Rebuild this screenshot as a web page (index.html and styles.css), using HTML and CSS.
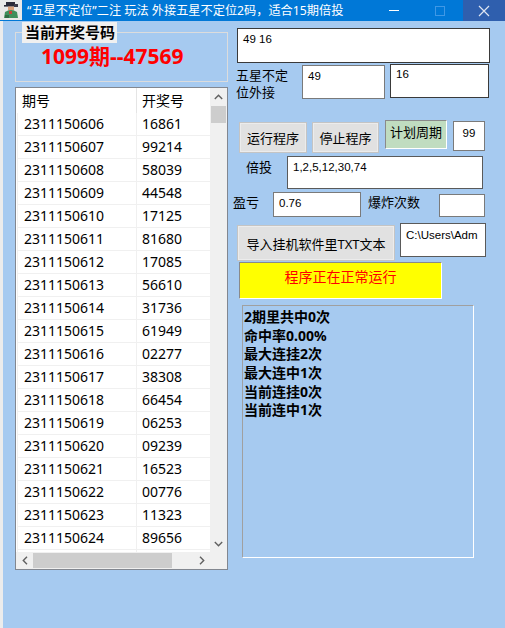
FILE: index.html
```html
<!DOCTYPE html>
<html lang="zh-CN">
<head>
<meta charset="utf-8">
<title>五星不定位</title>
<link rel="stylesheet" href="styles.css">
</head>
<body>
<div class="window">
  <div class="titlebar">
    <div class="app-icon">
      <svg width="18" height="18" viewBox="0 0 18 18">
        <rect x="4" y="1" width="9" height="3" fill="#2b2b3a"/>
        <rect x="2" y="4" width="13" height="1.6" fill="#2b2b3a"/>
        <rect x="6" y="5.6" width="6" height="4" fill="#d9a07a"/>
        <rect x="12" y="3" width="4" height="3" fill="#3a3a4a"/>
        <path d="M3 11 Q9 7 15 11 L16 17 L2 17 Z" fill="#3f8f5c"/>
        <rect x="7" y="10" width="3" height="3" fill="#c8423a"/>
        <rect x="3" y="14" width="4" height="3" fill="#2f6d45"/>
      </svg>
    </div>
    <div class="title">“五星不定位”二注 玩法 外接五星不定位2码，适合15期倍投</div>
    <div class="ctl ctl-min"><span class="min-line"></span></div>
    <div class="ctl ctl-max"><span class="max-box"></span></div>
    <div class="ctl ctl-close">
      <svg width="12" height="12" viewBox="0 0 12 12"><path d="M1 1 L11 11 M11 1 L1 11" stroke="#dfe5f1" stroke-width="1.2"/></svg>
    </div>
  </div>
  <div class="client">
    <div class="desk-strip"></div>
    <div class="left-col">
      <fieldset class="group">
        <legend class="group-title">当前开奖号码</legend>
        <div class="current">1099期--47569</div>
      </fieldset>
      <div class="list">
        <div class="list-body">
          <div class="list-head">
            <div class="c1">期号</div>
            <div class="c2">开奖号</div>
          </div>
          <div class="row"><div class="c1">2311150606</div><div class="c2">16861</div></div>
          <div class="row"><div class="c1">2311150607</div><div class="c2">99214</div></div>
          <div class="row"><div class="c1">2311150608</div><div class="c2">58039</div></div>
          <div class="row"><div class="c1">2311150609</div><div class="c2">44548</div></div>
          <div class="row"><div class="c1">2311150610</div><div class="c2">17125</div></div>
          <div class="row"><div class="c1">2311150611</div><div class="c2">81680</div></div>
          <div class="row"><div class="c1">2311150612</div><div class="c2">17085</div></div>
          <div class="row"><div class="c1">2311150613</div><div class="c2">56610</div></div>
          <div class="row"><div class="c1">2311150614</div><div class="c2">31736</div></div>
          <div class="row"><div class="c1">2311150615</div><div class="c2">61949</div></div>
          <div class="row"><div class="c1">2311150616</div><div class="c2">02277</div></div>
          <div class="row"><div class="c1">2311150617</div><div class="c2">38308</div></div>
          <div class="row"><div class="c1">2311150618</div><div class="c2">66454</div></div>
          <div class="row"><div class="c1">2311150619</div><div class="c2">06253</div></div>
          <div class="row"><div class="c1">2311150620</div><div class="c2">09239</div></div>
          <div class="row"><div class="c1">2311150621</div><div class="c2">16523</div></div>
          <div class="row"><div class="c1">2311150622</div><div class="c2">00776</div></div>
          <div class="row"><div class="c1">2311150623</div><div class="c2">11323</div></div>
          <div class="row"><div class="c1">2311150624</div><div class="c2">89656</div></div>
          <div class="row"><div class="c1"></div><div class="c2"></div></div>
        </div>
        <div class="vscroll">
          <div class="sb-btn"><svg width="9" height="6" viewBox="0 0 9 6"><path d="M0.8 5 L4.5 1.3 L8.2 5" fill="none" stroke="#606060" stroke-width="1.4"/></svg></div>
          <div class="vtrack"><div class="vthumb"></div></div>
          <div class="sb-btn"><svg width="9" height="6" viewBox="0 0 9 6"><path d="M0.8 1 L4.5 4.7 L8.2 1" fill="none" stroke="#606060" stroke-width="1.4"/></svg></div>
        </div>
        <div class="hscroll">
          <div class="sb-btn"><svg width="6" height="9" viewBox="0 0 6 9"><path d="M5 0.8 L1.3 4.5 L5 8.2" fill="none" stroke="#606060" stroke-width="1.4"/></svg></div>
          <div class="htrack"><div class="hthumb"></div></div>
          <div class="sb-btn"><svg width="6" height="9" viewBox="0 0 6 9"><path d="M1 0.8 L4.7 4.5 L1 8.2" fill="none" stroke="#606060" stroke-width="1.4"/></svg></div>
        </div>
        <div class="corner"></div>
      </div>
    </div>
    <div class="right-col">
      <div class="r r1">
        <div class="tb tb-dark tb-top">49 16</div>
      </div>
      <div class="r r2">
        <div class="lbl lbl-wrap"><div>五星不定</div><div>位外接</div></div>
        <div class="tb tb-49">49</div>
        <div class="tb tb-dark tb-16">16</div>
      </div>
      <div class="r r3">
        <div class="btn btn-run">运行程序</div>
        <div class="btn btn-stop">停止程序</div>
        <div class="sunken plan">计划周期</div>
        <div class="tb tb-99">99</div>
      </div>
      <div class="r r4">
        <div class="lbl lbl-bei">倍投</div>
        <div class="tb tb-mid tb-bei">1,2,5,12,30,74</div>
      </div>
      <div class="r r5">
        <div class="lbl lbl-yk">盈亏</div>
        <div class="tb tb-yk">0.76</div>
        <div class="lbl lbl-bz">爆炸次数</div>
        <div class="tb tb-bz"></div>
      </div>
      <div class="r r6">
        <div class="btn btn-import">导入挂机软件里TXT文本</div>
        <div class="tb tb-mid tb-path">C:\Users\Adm</div>
      </div>
      <div class="r r7">
        <div class="sunken status">程序正在正常运行</div>
      </div>
      <div class="r r8">
        <div class="stats">
          <div>2期里共中0次</div>
          <div>命中率0.00%</div>
          <div>最大连挂2次</div>
          <div>最大连中1次</div>
          <div>当前连挂0次</div>
          <div>当前连中1次</div>
        </div>
      </div>
    </div>
  </div>
</div>
</body>
</html>
```

FILE: styles.css
```css
* { box-sizing: border-box; }
html, body { margin: 0; padding: 0; }
body {
  width: 505px;
  height: 628px;
  overflow: hidden;
  background: #a6caf0;
  font-family: "Noto Sans", "Noto Sans CJK SC", sans-serif;
  color: #000;
}
.window {
  width: 505px;
  height: 628px;
  display: flex;
  flex-direction: column;
}

/* title bar */
.titlebar {
  height: 21px;
  flex: none;
  display: flex;
  align-items: stretch;
  background: #0078d7;
  color: #fff;
  font-size: 12.2px;
}
.app-icon {
  width: 22px;
  height: 20px;
  background: #e9e9e9;
  display: flex;
  align-items: center;
  justify-content: center;
}
.title {
  flex: 1;
  margin-left: 5px;
  line-height: 21px;
  white-space: nowrap;
  overflow: hidden;
}
.ctl {
  width: 46px;
  display: flex;
  align-items: center;
  justify-content: center;
}
.ctl-close { width: 42px; background: #2f5fae; }
.min-line { width: 10px; height: 1px; background: #fff; }
.max-box { width: 10px; height: 10px; border: 1px solid #3f98e6; }

/* client */
.client {
  flex: 1;
  display: flex;
  background: #a6caf0;
}
.desk-strip {
  width: 3px;
  background: #ececec;
}
.left-col {
  width: 213px;
  margin-left: 12px;
  display: flex;
  flex-direction: column;
}

/* group box */
.group {
  margin: 1px 0 0;
  padding: 0 0 14px 6px;
  border: 1px solid #dcdcdc;
  min-width: 0;
}
.group-title {
  width: 95px;
  height: 21px;
  padding: 0 0 0 3px;
  background: #f0f0f0;
  font-size: 15px;
  font-weight: bold;
  line-height: 21px;
  white-space: nowrap;
}
.current {
  margin-left: 19px;
  font-size: 21px;
  font-weight: bold;
  line-height: 24px;
  color: #ff0000;
  white-space: nowrap;
  padding-top: 1px;
  height: 24px;
}

/* list view */
.list {
  margin-top: 5px;
  height: 483px;
  border: 1px solid #828790;
  background: #fff;
  display: grid;
  grid-template-columns: 1fr 17px;
  grid-template-rows: 1fr 17px;
}
.list-body {
  overflow: hidden;
  font-size: 14px;
}
.list-head, .row {
  display: flex;
}
.list-head {
  height: 25px;
  line-height: 25px;
}
.list-head .c1 { border-right: 1px solid #e5e5e5; }
.row {
  height: 23px;
  line-height: 22px;
  border-bottom: 1px solid #f0f0f0;
  margin-left: 1px;
}
.c1 {
  width: 121px;
  padding-left: 6px;
  white-space: nowrap;
}
.row .c1 { width: 120px; border-right: 1px solid #f0f0f0; border-left: 1px solid #f0f0f0; }
.c2 {
  flex: 1;
  padding-left: 5px;
  white-space: nowrap;
}
.vscroll {
  background: #f0f0f0;
  display: flex;
  flex-direction: column;
}
.sb-btn {
  width: 17px;
  height: 17px;
  flex: none;
  display: flex;
  align-items: center;
  justify-content: center;
}
.vtrack { flex: 1; padding: 1px 1px 0 1px; }
.vthumb { height: 17px; background: #cdcdcd; }
.hscroll {
  background: #f0f0f0;
  display: flex;
}
.htrack { flex: 1; padding: 1px 0 0; }
.hthumb { width: 139px; height: 15px; background: #cdcdcd; }
.corner { background: #f0f0f0; }

/* right column */
.right-col {
  flex: 1;
  margin-left: 4px;
  display: flex;
  flex-direction: column;
}
.r {
  display: flex;
  align-items: flex-start;
}
.lbl {
  font-size: 13px;
  line-height: 15px;
  white-space: nowrap;
}
.tb {
  background: #fff;
  border: 1px solid #7a7a7a;
  padding: 3px 5px;
  font-family: "Liberation Sans", "Noto Sans CJK SC", sans-serif;
  font-size: 11.5px;
  line-height: 14px;
  white-space: nowrap;
  overflow: hidden;
}
.tb-dark { border-color: #3a3a3a; }
.tb-mid { border-color: #5a5a5a; }
.btn {
  background: #e1e1e1;
  border: 1px solid #c4c4c4;
  box-shadow: inset 0 0 0 1px #ececec;
  display: flex;
  align-items: center;
  justify-content: center;
  font-size: 13px;
  white-space: nowrap;
}
.sunken {
  border-top: 1px solid #8a8a8a;
  border-left: 1px solid #8a8a8a;
  border-right: 1px solid #fff;
  border-bottom: 1px solid #fff;
  text-align: center;
  white-space: nowrap;
}

.r1 { margin-top: 7px; }
.tb-top { margin-left: 5px; width: 253px; height: 35px; }

.r2 { margin-top: 1px; }
.lbl-wrap { margin-left: 4px; margin-top: 3px; width: 66px; line-height: 17px; }
.tb-49 { margin-top: 1px; width: 83px; height: 34px; padding-top: 3px; }
.tb-16 { margin-left: 5px; width: 99px; height: 34px; padding-top: 2px; }

.r3 { margin-top: 19px; }
.btn-run { margin-left: 7px; margin-top: 2px; width: 68px; height: 31px; }
.btn-stop { margin-left: 5px; margin-top: 2px; width: 67px; height: 31px; }
.plan {
  margin-left: 6px;
  width: 62px;
  height: 29px;
  background: #c0dcc0;
  font-size: 13px;
  line-height: 15px;
  padding-top: 4px;
}
.tb-99 { margin-left: 6px; margin-top: 1px; width: 32px; height: 30px; text-align: center; padding: 4px 0 0; }

.r4 { margin-top: 3px; }
.lbl-bei { margin-left: 14px; margin-top: 4px; width: 26px; }
.tb-bei { margin-left: 15px; width: 196px; height: 33px; }

.r5 { margin-top: 3px; }
.lbl-yk { margin-left: 1px; margin-top: 3px; width: 26px; }
.tb-yk { margin-left: 14px; width: 88px; height: 25px; }
.lbl-bz { margin-left: 7px; margin-top: 3px; width: 52px; }
.tb-bz { margin-left: 19px; margin-top: 2px; width: 46px; height: 23px; }

.r6 { margin-top: 6px; }
.btn-import { margin-left: 5px; margin-top: 2px; width: 158px; height: 36px; }
.tb-path { margin-left: 5px; width: 86px; height: 34px; padding-top: 4px; }

.r7 { margin-top: 1px; }
.status {
  margin-left: 7px;
  width: 203px;
  height: 37px;
  background: #ffff00;
  color: #ff0000;
  font-size: 14px;
  line-height: 16px;
  padding-top: 6px;
}

.r8 { margin-top: 6px; }
.stats {
  margin-left: 10px;
  width: 232px;
  height: 253px;
  border-top: 1px solid #a0a0a0;
  border-left: 1px solid #a0a0a0;
  border-right: 1px solid #fff;
  border-bottom: 1px solid #fff;
  padding: 2px 0 0 1px;
  font-size: 14px;
  font-weight: bold;
  line-height: 18.66px;
  white-space: nowrap;
}
```
